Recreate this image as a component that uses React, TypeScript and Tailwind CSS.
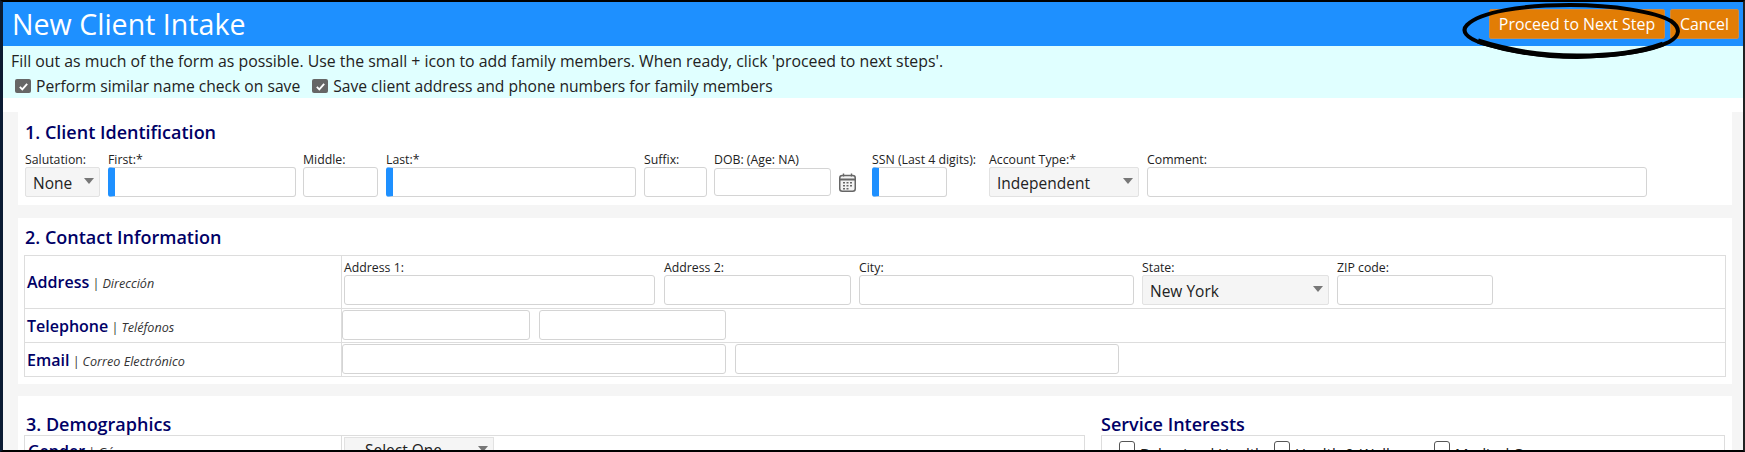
const navy = 'text-[#000066]'
const inputBase = 'block h-[30px] rounded-[3px] border border-[#d4d4d4] bg-white'

const Field = ({ label, className = '', required = false, children }: { label: string, className?: string, required?: boolean, children?: React.ReactNode }) => (
  <div className={`shrink-0 ${className}`}>
    <div className="h-[15px] whitespace-nowrap text-[12.3px] leading-[16px] text-[#222]">{label}</div>
    {children ?? <input className={`${inputBase} w-full ${required ? 'border-l-[7px] border-l-[#1E90FF]' : ''}`} />}
  </div>
)

const Caret = ({ className = '' }: { className?: string }) => (
  <svg viewBox="0 0 10 6" className={`pointer-events-none absolute h-[6px] w-[10px] ${className}`}>
    <path d="M0 0h10L5 6z" fill="#777" />
  </svg>
)

const SelectBox = ({ value, className = '' }: { value: string, className?: string }) => (
  <div className={`relative h-[30px] w-full rounded-[2px] border border-[#e2e2e2] bg-[#f5f5f5] pl-[7px] text-[15.5px] leading-[30px] text-[#222] ${className}`}>
    {value}
    <Caret className="right-[5px] top-[10px]" />
  </div>
)

const CalendarIcon = () => (
  <svg viewBox="0 0 17 19" className="ml-[8px] mt-[21px] h-[19px] w-[17px] shrink-0">
    <rect x="0.75" y="2.5" width="15.5" height="15.75" rx="2.5" fill="#f3f3f3" stroke="#666" strokeWidth="1.5" />
    <path d="M1 6.5h15" stroke="#666" strokeWidth="2" />
    <path d="M4.5 0.5v3M12.5 0.5v3" stroke="#666" strokeWidth="1.4" />
    <path d="M4 9h2v1.6H4zM7.5 9h2v1.6h-2zM11 9h2v1.6h-2zM4 12h2v1.6H4zM7.5 12h2v1.6h-2zM11 12h2v1.6h-2zM7.5 15h2v1.4h-2zM4 15h2v1.4H4z" fill="#666" />
  </svg>
)

const Checked = ({ label, className = '' }: { label: string, className?: string }) => (
  <label className={`flex items-center ${className}`}>
    <span className="flex h-[14px] w-[16px] items-center justify-center rounded-[2px] bg-[#666]">
      <svg viewBox="0 0 12 12" className="h-[11px] w-[11px]">
        <path d="M2 6.5l2.7 2.7L10 3.2" fill="none" stroke="#fff" strokeWidth="2" />
      </svg>
    </span>
    <span className="ml-[5px] whitespace-nowrap text-[15.65px]">{label}</span>
  </label>
)

const RowLabel = ({ title, sub }: { title: string, sub: string }) => (
  <div className="flex w-[316px] shrink-0 items-baseline whitespace-nowrap pl-[2px]">
    <span className={`text-[16px] font-semibold ${navy}`}>{title}</span>
    <span className="ml-[3px] text-[12.6px] italic text-[#333]">| {sub}</span>
  </div>
)

const Interest = ({ label, className = '' }: { label: string, className?: string }) => (
  <div className={`flex shrink-0 items-start ${className}`}>
    <span className="h-[16px] w-[16px] shrink-0 rounded-[3px] border border-[#555] bg-white" />
    <span className="ml-[5px] whitespace-nowrap pt-[1px] text-[15px] text-[#222]">{label}</span>
  </div>
)

const App = () => {
  return (
    <div className="relative h-[452px] w-[1745px] overflow-hidden border-y-2 border-l-[3px] border-r-2 border-y-black border-l-[#0b1b33] border-r-[#222] bg-white font-['Open_Sans','Noto_Sans',sans-serif]">
      <div className="flex h-[44px] items-center justify-between bg-[#1E90FF] pl-[9px] pr-[4px]">
        <h1 className="text-[28.6px] leading-none text-white">New Client Intake</h1>
        <div className="flex gap-[5px]">
          <button className="h-[30px] w-[176px] rounded-[2px] border border-[#c98a45] bg-[#E27D05] pt-[1px] text-[15.9px] text-white">Proceed to Next Step</button>
          <button className="h-[30px] w-[69px] rounded-[2px] border border-[#c98a45] bg-[#E27D05] pt-[1px] text-[15.9px] text-white">Cancel</button>
        </div>
      </div>

      {/* hand drawn marker round the button */}
      <svg viewBox="0 0 220 60" className="pointer-events-none absolute left-[1459px] top-0 h-[60px] w-[220px]">
        <path
          d="M108 3C60 3 18 10 5 23c-6 6-1 13 15 18 26 8 60 14 95 14 38-1 74-6 92-15 11-6 12-14 2-21C194 10 152 3 108 3z"
          fill="none"
          stroke="#000"
          strokeWidth="4"
        />
        <path d="M16 39c28 9 62 15 99 15 32 0 64-4 86-12" fill="none" stroke="#000" strokeWidth="5" />
      </svg>

      <div className="h-[52px] bg-[#E0FFFF] pl-[8px] text-[15.85px] leading-[26px] text-[#222]">
        <div className="h-[27px] pt-[2px]">Fill out as much of the form as possible. Use the small + icon to add family members. When ready, click 'proceed to next steps'.</div>
        <div className="flex pl-[4px]">
          <Checked label="Perform similar name check on save" />
          <Checked label="Save client address and phone numbers for family members" className="ml-[12px]" />
        </div>
      </div>

      <div className="h-[14px] bg-white" />

      <div className="bg-[#f5f5f5] pl-[15px] pr-[11px]">
        <section className="mb-[13px] h-[93px] bg-white pl-[7px] pt-[8px]">
          <h2 className={`h-[24px] text-[18px] font-semibold leading-[24px] ${navy}`}>1. Client Identification</h2>
          <div className="mt-[8px] flex">
            <Field label="Salutation:" className="w-[75px]"><SelectBox value="None" /></Field>
            <Field label="First:*" required className="ml-[8px] w-[188px]" />
            <Field label="Middle:" className="ml-[7px] w-[75px]" />
            <Field label="Last:*" required className="ml-[8px] w-[250px]" />
            <Field label="Suffix:" className="ml-[8px] w-[63px]" />
            <Field label="DOB: (Age: NA)" className="ml-[7px] w-[117px]">
              <input className="mt-[1px] block h-[28px] w-full rounded-[3px] border border-[#d4d4d4] bg-white" />
            </Field>
            <CalendarIcon />
            <Field label="SSN (Last 4 digits):" required className="ml-[16px] w-[75px]" />
            <Field label="Account Type:*" className="ml-[42px] w-[150px]"><SelectBox value="Independent" /></Field>
            <Field label="Comment:" className="ml-[8px] w-[500px]" />
          </div>
        </section>

        <section className="mb-[12px] h-[166px] bg-white px-[6px] pt-[7px]">
          <h2 className={`h-[24px] pl-[1px] text-[18px] font-semibold leading-[24px] ${navy}`}>2. Contact Information</h2>
          <div className="mt-[6px] border border-[#ddd]">
            <div className="flex h-[53px] border-b border-[#ddd]">
              <div className="flex w-[317px] shrink-0 items-center border-r border-[#ddd]">
                <RowLabel title="Address" sub="Dirección" />
              </div>
              <div className="flex pl-[2px] pt-[4px]">
                <Field label="Address 1:" className="w-[311px]" />
                <Field label="Address 2:" className="ml-[9px] w-[187px]" />
                <Field label="City:" className="ml-[8px] w-[275px]" />
                <Field label="State:" className="ml-[8px] w-[187px]"><SelectBox value="New York" /></Field>
                <Field label="ZIP code:" className="ml-[8px] w-[156px]" />
              </div>
            </div>
            <div className="flex h-[34px] border-b border-[#ddd]">
              <div className="flex w-[317px] shrink-0 items-center border-r border-[#ddd]">
                <RowLabel title="Telephone" sub="Teléfonos" />
              </div>
              <div className="flex pt-[1px]">
                <input className={`${inputBase} w-[188px]`} />
                <input className={`${inputBase} ml-[9px] w-[187px]`} />
              </div>
            </div>
            <div className="flex h-[33px]">
              <div className="flex w-[317px] shrink-0 items-center border-r border-[#ddd]">
                <RowLabel title="Email" sub="Correo Electrónico" />
              </div>
              <div className="flex pt-[1px]">
                <input className={`${inputBase} w-[384px]`} />
                <input className={`${inputBase} ml-[9px] w-[384px]`} />
              </div>
            </div>
          </div>
        </section>

        <section className="flex h-[60px] bg-white px-[6px] pt-[16px]">
          <div className="w-[1061px] shrink-0">
            <h2 className={`h-[23px] pl-[2px] text-[18px] font-semibold leading-[24px] ${navy}`}>3. Demographics</h2>
            <div className="flex border border-[#ddd]">
              <div className="flex w-[317px] shrink-0 items-baseline border-r border-[#ddd] pl-[3px] pt-[3px]">
                <span className={`text-[16px] font-semibold ${navy}`}>Gender</span>
                <span className="ml-[3px] text-[12.6px] italic text-[#333]">| Género</span>
              </div>
              <div className="relative ml-[2px] mt-[1px] h-[30px] w-[150px] border border-[#e2e2e2] bg-[#f5f5f5] pl-[20px] pt-[1px] text-[15.5px] text-[#222]">
                Select One
                <Caret className="right-[5px] top-[8px]" />
              </div>
            </div>
          </div>
          <div className="ml-[16px] w-[624px] shrink-0">
            <h2 className={`h-[23px] text-[18px] font-semibold leading-[24px] ${navy}`}>Service Interests</h2>
            <div className="flex h-[40px] border border-[#ddd] pl-[17px] pt-[5px]">
              <Interest label="Behavioral Health" className="w-[155px]" />
              <Interest label="Health & Wellness" className="w-[160px]" />
              <Interest label="Medical Care" />
            </div>
          </div>
        </section>
      </div>
    </div>
  )
}

export default App
